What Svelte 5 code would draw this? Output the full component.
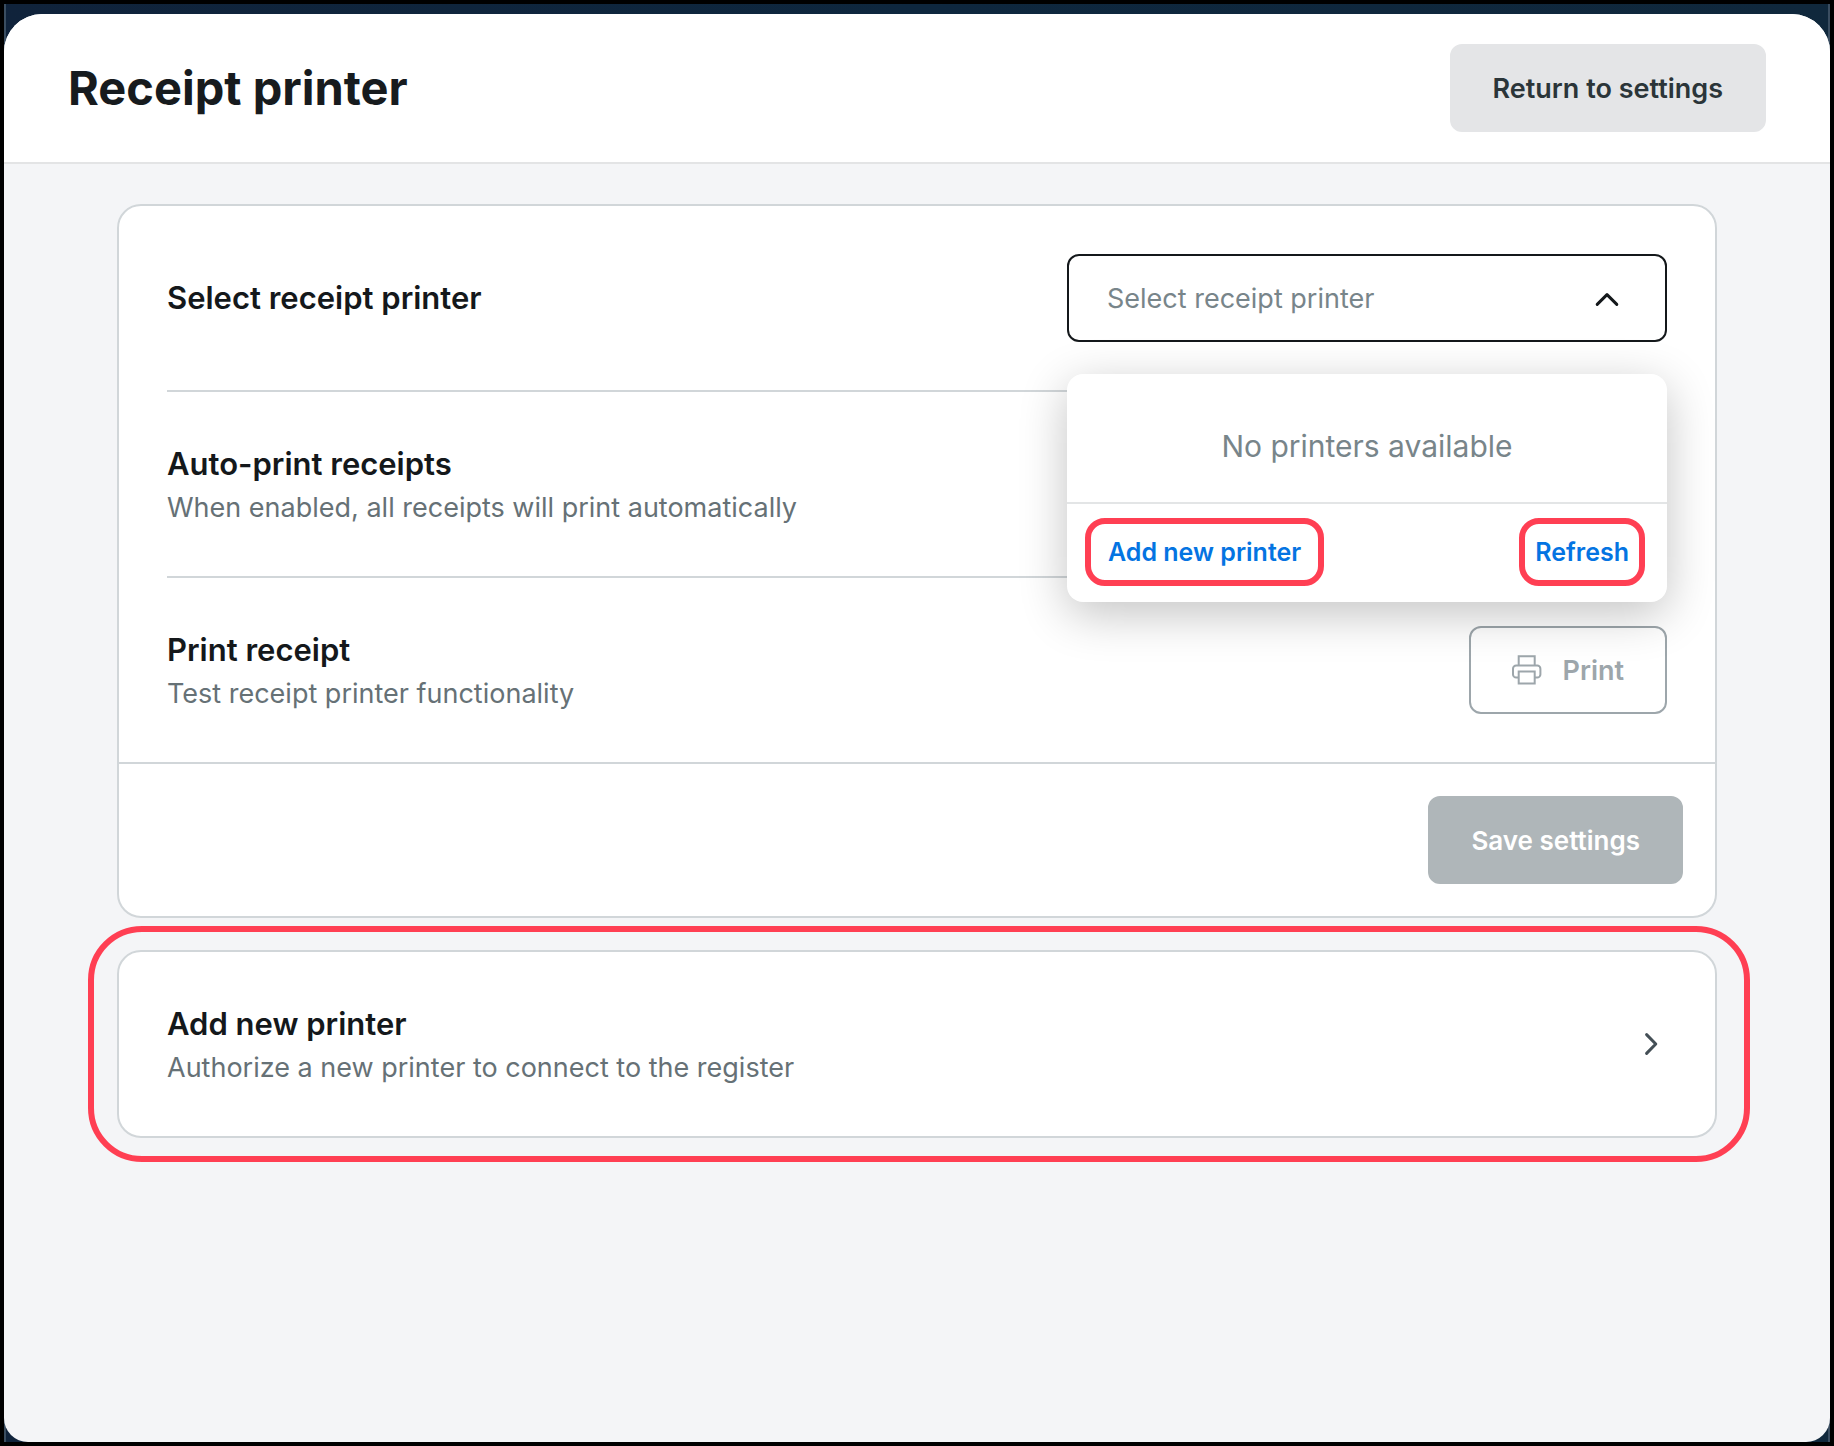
<script lang="ts">
  /**
   * Receipt printer settings page.
   *
   * The printer drop-down has its own menu, since it also holds
   * the "Add new printer" and "Refresh" actions.
   */

  let menuOpen = $state(true);

  function toggleMenu(e: MouseEvent) {
    // keep the native list closed, the menu below takes its place
    e.preventDefault();
    menuOpen = !menuOpen;
  }
</script>

<div class="window">
  <div class="sheet">
    <header class="header">
      <h1>Receipt printer</h1>
      <button class="btn btn-secondary">Return to settings</button>
    </header>

    <main class="content">
      <section class="card">
        <div class="rows">
          <div class="row">
            <label class="row-title" for="printer">Select receipt printer</label>

            <div class="dropdown">
              <select id="printer" class="printer-select" onmousedown={toggleMenu}>
                <option value="">Select receipt printer</option>
              </select>
              <svg class="caret" class:closed={!menuOpen} viewBox="0 0 32 32" aria-hidden="true">
                <path d="M6.2 22.4 16 12.6l9.8 9.8" />
              </svg>

              {#if menuOpen}
                <div class="menu">
                  <p class="menu-empty">No printers available</p>
                  <div class="menu-actions">
                    <a class="action add" href="#add-printer">Add new printer</a>
                    <button class="action">Refresh</button>
                  </div>
                </div>
              {/if}
            </div>
          </div>

          <div class="row">
            <div class="row-text">
              <h2 class="row-title">Auto-print receipts</h2>
              <p class="row-desc">When enabled, all receipts will print automatically</p>
            </div>
          </div>

          <div class="row">
            <div class="row-text">
              <h2 class="row-title">Print receipt</h2>
              <p class="row-desc">Test receipt printer functionality</p>
            </div>
            <button class="btn btn-outline" disabled>
              <svg class="print-icon" viewBox="0 0 30 30" aria-hidden="true">
                <path d="M6.7 10.6V1.2h16v9.4" />
                <path d="M6.5 22.6H4.2A3.2 3.2 0 0 1 1 19.4v-5.6a3.2 3.2 0 0 1 3.2-3.2h21a3.2 3.2 0 0 1 3.2 3.2v5.6a3.2 3.2 0 0 1-3.2 3.2h-2.3" />
                <path d="M6.7 16.6h16v12H6.7z" />
              </svg>
              Print
            </button>
          </div>
        </div>

        <footer class="card-footer">
          <button class="btn btn-primary" disabled>Save settings</button>
        </footer>
      </section>

      <a id="add-printer" class="card card-link" href="#add-printer">
        <div class="row-text">
          <h2 class="row-title">Add new printer</h2>
          <p class="row-desc">Authorize a new printer to connect to the register</p>
        </div>
        <svg class="chevron" viewBox="0 0 32 32" aria-hidden="true">
          <path d="M11.6 6.6 20.8 16l-9.2 9.4" />
        </svg>
      </a>
    </main>
  </div>
</div>

<style>
  :global(body) {
    margin: 0;
    background: #000;
  }

  .window {
    display: flex;
    flex-direction: column;
    box-sizing: border-box;
    min-height: 100vh;
    padding-top: 10px;
    border: 4px solid #000;
    background: linear-gradient(to right, #10233b, #0e273e 50%, #10283c);
    box-shadow: inset 2px 0 #3a4d60, inset -2px 0 #3a4d60;
    color: #14181b;
    font-family: Inter, "Liberation Sans", sans-serif;
  }

  .sheet {
    flex: 1;
    border-radius: 38px 38px 24px 24px;
    background: #f4f5f7;
    overflow: hidden;
  }

  .header {
    display: flex;
    align-items: center;
    justify-content: space-between;
    padding: 30px 64px;
    border-bottom: 2px solid #e3e4e5;
    background: #fff;
  }

  h1,
  h2,
  p {
    margin: 0;
  }

  h1 {
    color: #171b1e;
    font-size: 47px;
    font-weight: 700;
    line-height: 64px;
  }

  .btn {
    display: flex;
    align-items: center;
    justify-content: center;
    box-sizing: border-box;
    height: 88px;
    padding: 0 41px;
    border: 2px solid transparent;
    border-radius: 12px;
    font-family: inherit;
    font-size: 27px;
    font-weight: 600;
    white-space: nowrap;
  }

  .btn-secondary {
    border-color: #e4e5e7;
    background: #e4e5e7;
    color: #2b3539;
  }

  .btn-outline {
    gap: 20px;
    border-color: #9da6ab;
    background: transparent;
    color: #9da6ab;
  }

  .btn-primary {
    border-color: #afb6b9;
    background: #afb6b9;
    color: #fff;
    font-size: 26px;
  }

  .content {
    display: flex;
    flex-direction: column;
    gap: 32px;
    width: calc(100% - 128px);
    max-width: 1600px;
    margin: 0 auto;
    padding: 40px 0;
  }

  .card {
    border: 2px solid #d1d6d9;
    border-radius: 24px;
    background: #fff;
  }

  .rows {
    padding: 0 48px;
  }

  .row {
    display: flex;
    align-items: center;
    justify-content: space-between;
    gap: 32px;
    padding: 48px 0;
  }

  .row + .row {
    border-top: 2px solid #d1d6d9;
  }

  .row-title {
    color: #14181b;
    font-size: 31px;
    font-weight: 600;
    line-height: 48px;
  }

  .row-desc {
    color: #667176;
    font-size: 27px;
    line-height: 40px;
  }

  .dropdown {
    position: relative;
    width: 600px;
  }

  .printer-select {
    display: block;
    appearance: none;
    width: 100%;
    height: 88px;
    padding: 0 88px 0 38px;
    border: 2px solid #14181b;
    border-radius: 12px;
    background: #fff;
    color: #78858a;
    font-family: inherit;
    font-size: 27px;
  }

  .caret {
    position: absolute;
    top: 28px;
    right: 44px;
    width: 32px;
    height: 32px;
    pointer-events: none;
  }

  .caret.closed {
    transform: rotate(180deg);
  }

  .caret path,
  .chevron path {
    fill: none;
    stroke: #14181b;
    stroke-width: 3;
    stroke-linecap: round;
    stroke-linejoin: round;
  }

  .menu {
    position: absolute;
    z-index: 1;
    top: 120px;
    left: 0;
    width: 100%;
    border-radius: 16px;
    background: #fff;
    box-shadow: 0 12px 48px rgba(0, 0, 0, 0.24);
  }

  .menu-empty {
    padding: 48px 24px 32px;
    border-bottom: 2px solid #e3e5e6;
    color: #78858a;
    font-size: 30px;
    line-height: 48px;
    text-align: center;
  }

  .menu-actions {
    display: flex;
    justify-content: space-between;
    padding: 14px 22px 16px 18px;
  }

  .action {
    padding: 0 10px;
    border: 6px solid #ff3f53;
    border-radius: 20px;
    background: none;
    color: #0474e2;
    font-family: inherit;
    font-size: 25px;
    font-weight: 600;
    line-height: 56px;
    text-decoration: none;
  }

  .action.add {
    padding: 0 17px;
  }

  .print-icon {
    width: 30px;
    height: 30px;
    fill: none;
    stroke: currentColor;
    stroke-width: 2;
  }

  .card-footer {
    display: flex;
    justify-content: flex-end;
    padding: 32px;
    border-top: 2px solid #d1d6d9;
  }

  .card-link {
    position: relative;
    display: flex;
    align-items: center;
    justify-content: space-between;
    padding: 48px;
    text-decoration: none;
  }

  /* callout ring round the card */
  .card-link::after {
    content: "";
    position: absolute;
    inset: -26px -35px -26px -31px;
    border: 6px solid #ff3f53;
    border-radius: 54px;
    pointer-events: none;
  }

  .chevron {
    width: 32px;
    height: 32px;
  }

  .chevron path {
    stroke: #444f56;
  }
</style>
